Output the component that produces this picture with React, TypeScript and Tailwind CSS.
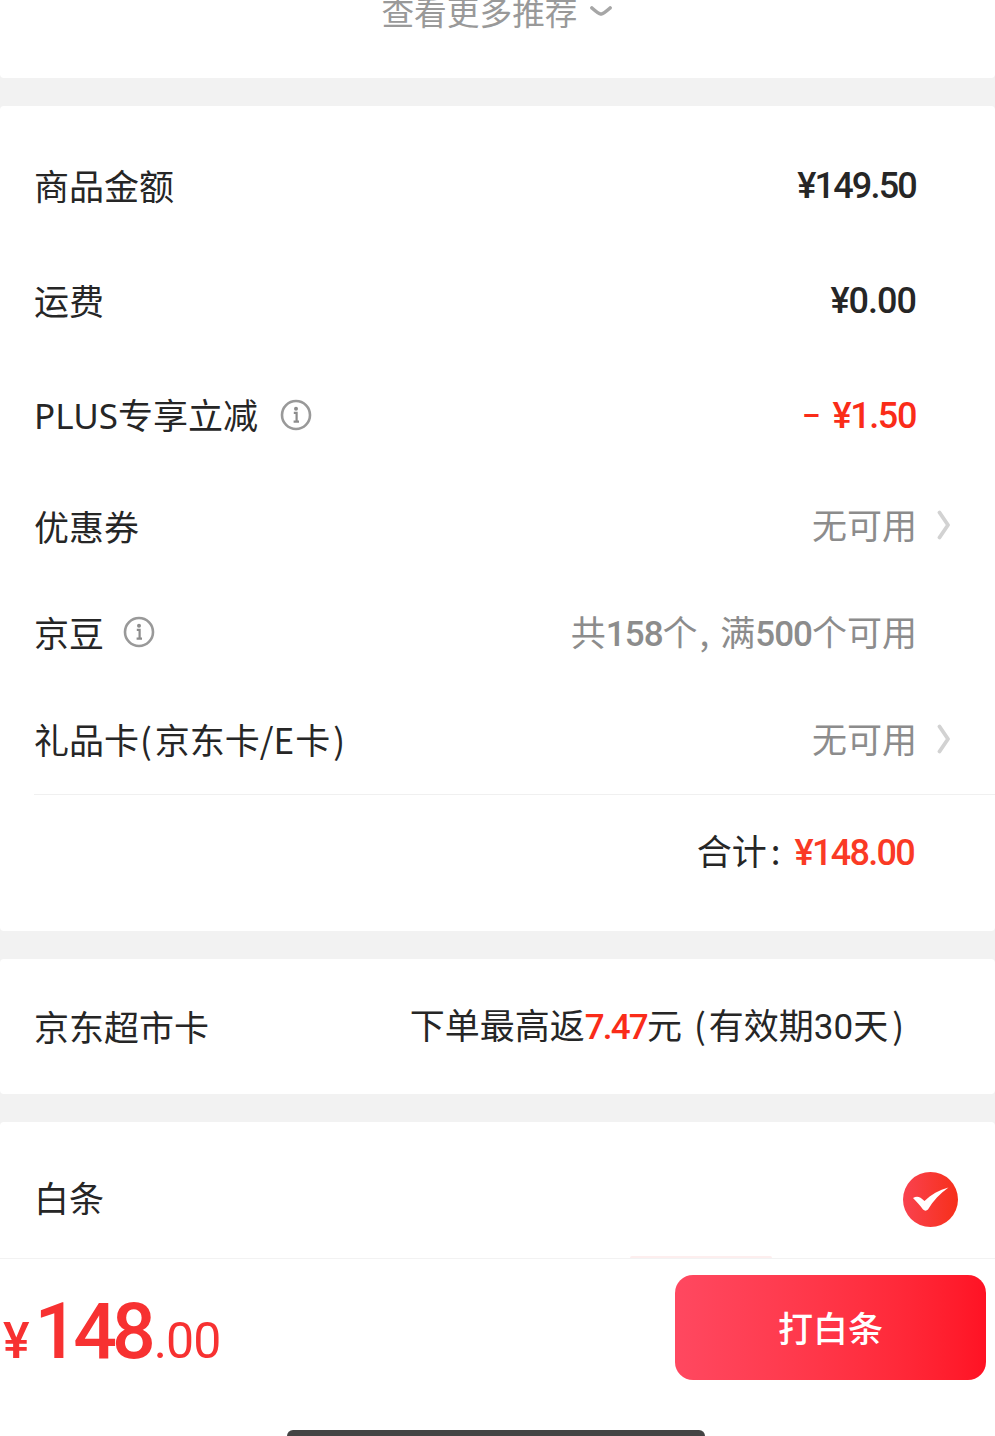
import React from "react";

const cjk = "font-['Noto_Sans_CJK_SC','Noto_Sans',sans-serif]";
const num = "font-['Roboto','Noto_Sans_CJK_SC',sans-serif]";

const InfoIcon = () => (
  <svg width="32" height="32" viewBox="0 0 32 32" fill="none">
    <circle cx="16" cy="16" r="14" stroke="#999999" strokeWidth="2.600" />
    <circle cx="16" cy="9.800" r="2" fill="#8c8c8c" />
    <path d="M13.800 13.800h2.800v8.600M13.600 22.600h5.400" stroke="#8c8c8c" strokeWidth="2.200" />
  </svg>
);

const Chevron = () => (
  <svg width="14" height="30" viewBox="0 0 14 30" fill="none">
    <path d="M2.500 2.500 11 15 2.500 27.500" stroke="#d2d2d2" strokeWidth="3.800" strokeLinecap="round" strokeLinejoin="round" />
  </svg>
);

const Row = ({ h, children }: { h: string; children: React.ReactNode }) => (
  <div className={`flex items-center justify-between pr-[78px] pb-[4px] pl-[34px] ${h}`}>{children}</div>
);

const Label = ({ children }: { children: React.ReactNode }) => (
  <span className={`${cjk} text-[35px] leading-none whitespace-nowrap text-[#262626]`}>{children}</span>
);

const Muted = ({ children }: { children: React.ReactNode }) => (
  <span className={`${cjk} text-[35px] leading-none whitespace-nowrap text-[#8c8c8c]`}>{children}</span>
);

const Amount = ({ tracking, children }: { tracking: string; children: React.ReactNode }) => (
  <span className={`${num} mt-[2px] mr-[1px] text-[36px] leading-none font-medium text-[#262626] ${tracking}`}>{children}</span>
);

const NoneAvailable = () => (
  <div className="relative">
    <Muted>无可用</Muted>
    <div className="absolute top-[4px] left-[125px]">
      <Chevron />
    </div>
  </div>
);

export default function App() {
  return (
    <div className={`${cjk} flex h-[1436px] w-[995px] flex-col overflow-hidden bg-[#f2f2f2]`}>
      {/* recommend footer */}
      <div className="flex h-[78px] items-start justify-center gap-[12px] overflow-hidden rounded-b-[4px] bg-white pr-[2px]">
        <span className="-mt-[11px] text-[32.700px] leading-[44px] text-[#999999]">查看更多推荐</span>
        <svg className="mt-[5px]" width="22" height="14" viewBox="0 0 24 14" fill="none">
          <path d="M2 2.500c4 3.500 7 6.200 10 6.800 3-.6 6-3.300 10-6.800" stroke="#a6a6a6" strokeWidth="3.800" strokeLinecap="round" />
        </svg>
      </div>

      {/* price details */}
      <div className="mt-[28px] rounded-[4px] bg-white pt-[23px] pb-[20px]">
        <Row h="h-[115px]">
          <Label>商品金额</Label>
          <Amount tracking="tracking-[-1.800px]">¥149.50</Amount>
        </Row>
        <Row h="h-[115px]">
          <Label>运费</Label>
          <Amount tracking="tracking-[-1px]">¥0.00</Amount>
        </Row>
        <Row h="h-[115px]">
          <div className="flex items-center gap-[22px]">
            <Label>
              <span className="font-['Noto_Sans',sans-serif]">PLUS</span>专享立减
            </Label>
            <InfoIcon />
          </div>
          <span className={`${num} mt-[2px] mr-[1px] flex items-center gap-[14px] text-[36px] leading-none font-medium tracking-[-1.400px] text-[#fa2c19]`}>
            <span className="text-[28px] font-bold">–</span>
            <span>¥1.50</span>
          </span>
        </Row>
        <Row h="h-[106px]">
          <Label>优惠券</Label>
          <NoneAvailable />
        </Row>
        <Row h="h-[107px]">
          <div className="flex items-center gap-[19px]">
            <Label>京豆</Label>
            <InfoIcon />
          </div>
          <span className="pt-[2px]">
            <Muted>
              共<span className={`${num} font-medium tracking-[-1px]`}>158</span>个<span className="mr-[11px] ml-[2px]">,</span>满<span className={`${num} font-medium tracking-[-1px]`}>500</span>个可用
            </Muted>
          </span>
        </Row>
        <Row h="h-[107px]">
          <Label>
            礼品卡<span className="mr-[3px] ml-[1px]">(</span>京东卡/E<span className="ml-[1px]">卡</span>
            <span className="ml-[3px]">)</span>
          </Label>
          <NoneAvailable />
        </Row>
        <div className="ml-[34px] flex h-[117px] items-center justify-end border-t border-[#f0f0f0] pr-[81px]">
          <div className="pb-[4px]">
            <Label>合计</Label>
            <span className="mr-[14px] ml-[4px] text-[35px] leading-none text-[#262626]">:</span>
          </div>
          <span className={`${num} text-[36px] leading-none font-medium tracking-[-1.700px] text-[#fa3a25]`}>¥148.00</span>
        </div>
      </div>

      {/* supermarket card */}
      <div className="mt-[28px] flex h-[135px] items-center justify-between rounded-[4px] bg-white pr-[91px] pb-[2px] pl-[34px]">
        <Label>京东超市卡</Label>
        <Label>
          下单最高返<span className={`${num} font-medium tracking-[-1.800px] text-[#fa2c19]`}>7.47</span>元<span className="mr-[3px] ml-[12px]">(</span>有效期<span className={num}>30</span>天<span className="ml-[4px]">)</span>
        </Label>
      </div>

      {/* payment */}
      <div className="relative mt-[28px] flex h-[136px] items-center justify-between rounded-t-[4px] bg-white pt-[19px] pr-[37px] pl-[34px]">
        <span className="pb-[3px]">
          <Label>白条</Label>
        </span>
        <svg width="55" height="55" viewBox="0 0 55 55">
          <defs>
            <linearGradient id="checkFill" x1="0" y1="0" x2="1" y2="0">
              <stop offset="0" stopColor="#f9424f" />
              <stop offset="1" stopColor="#f72f1a" />
            </linearGradient>
          </defs>
          <circle cx="27.500" cy="27.500" r="27.500" fill="url(#checkFill)" />
          <path d="M10 26c4-2.500 7-1.500 11.500 3C28 22.500 36 18 45.500 15.500 37 21.500 30 29 25 37.500c-1.500 1.500-3.500 1.500-5 0C17 33.500 14 30 10 26Z" fill="#ffffff" />
        </svg>
        <div className="absolute bottom-0 left-[630px] h-[2px] w-[142px] rounded-t-lg bg-[#fdeeee]" />
      </div>

      {/* bottom pay bar */}
      <div className="relative flex flex-1 items-start justify-between border-t border-[#f2f2f2] bg-white pt-[16px] pr-[9px] pl-[3px]">
        <div className={`${num} flex items-baseline pt-[19px] leading-none font-medium text-[#f73131]`}>
          <span className="text-[50px]">¥</span>
          <span className="ml-[5px] text-[77px] tracking-[-5px]">148</span>
          <span className="ml-[3px] text-[50px] font-normal tracking-[-1px]">.00</span>
        </div>
        <button className="flex h-[105px] w-[311px] items-center justify-center rounded-[18px] bg-gradient-to-r from-[#ff4860] to-[#ff1224] text-[35px] font-medium text-white">
          打白条
        </button>
        <div className="absolute bottom-0 left-[287px] h-[6px] w-[418px] rounded-t-lg bg-[#444444]" />
      </div>
    </div>
  );
}
